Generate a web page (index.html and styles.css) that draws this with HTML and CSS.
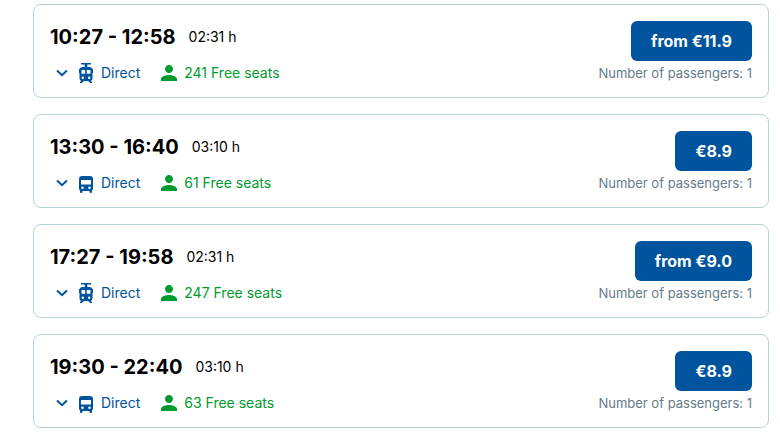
FILE: index.html
```html
<!DOCTYPE html>
<html lang="en">
<head>
<meta charset="utf-8">
<title>Connections</title>
<link rel="stylesheet" href="styles.css">
</head>
<body>
<svg class="sprite" aria-hidden="true">
  <symbol id="chevron" viewBox="0 0 12 8"><path d="M1 1.500l5 4.700 5-4.700" fill="none" stroke="currentColor" stroke-width="2"/></symbol>
  <symbol id="tram" viewBox="0 0 14 20"><path fill="currentColor" fill-rule="evenodd" d="M2 0h10v1.500H8.300V4h2.200A3 3 0 0 1 13.400 6H14v4h-.5v5.500a2.500 2.500 0 0 1-1.700 2.300l1.200 1.200v1h-1.800l-2-2H4.800l-2 2H1v-1l1.200-1.200A2.500 2.500 0 0 1 .5 15.500V10H0V6h.6A3 3 0 0 1 3.500 4h2.200V1.500H2zM2.500 7v3.800h3.700V7zm5.300 0v3.800h3.700V7zM3.800 13.500a1.200 1.200 0 1 0 0 2.400 1.200 1.200 0 0 0 0-2.400zm6.400 0a1.200 1.200 0 1 0 0 2.400 1.200 1.200 0 0 0 0-2.400z"/></symbol>
  <symbol id="bus" viewBox="0 0 14 20"><path fill="currentColor" fill-rule="evenodd" d="M3 3h8a3 3 0 0 1 3 3v9.500a2 2 0 0 1-1 1.800V19a1 1 0 0 1-1 1h-.5a1 1 0 0 1-1-1v-1h-7v1a1 1 0 0 1-1 1H2a1 1 0 0 1-1-1v-1.700a2 2 0 0 1-1-1.800V6a3 3 0 0 1 3-3zM2 7v4.500h10V7zM3.500 13.500a1.300 1.300 0 1 0 0 2.600 1.300 1.300 0 0 0 0-2.600zm7 0a1.300 1.300 0 1 0 0 2.600 1.300 1.300 0 0 0 0-2.600z"/></symbol>
  <symbol id="person" viewBox="4 4 16 16"><path fill="currentColor" d="M12 12c2.210 0 4-1.790 4-4s-1.790-4-4-4-4 1.790-4 4 1.790 4 4 4zm0 2c-2.670 0-8 1.340-8 4v2h16v-2c0-2.660-5.330-4-8-4z"/></symbol>
</svg>
<main class="trips">
  <article class="trip">
    <div class="info">
      <div class="times"><h2>10:27 - 12:58</h2><span class="duration">02:31 h</span></div>
      <div class="details">
        <button class="route" type="button"><svg class="chevron"><use href="#chevron"/></svg><svg class="vehicle"><use href="#tram"/></svg>Direct</button>
        <span class="seats"><svg class="person"><use href="#person"/></svg>241 Free seats</span>
      </div>
    </div>
    <div class="offer"><button class="price" type="button">from €11.9</button><p>Number of passengers: 1</p></div>
  </article>
  <article class="trip">
    <div class="info">
      <div class="times"><h2>13:30 - 16:40</h2><span class="duration">03:10 h</span></div>
      <div class="details">
        <button class="route" type="button"><svg class="chevron"><use href="#chevron"/></svg><svg class="vehicle"><use href="#bus"/></svg>Direct</button>
        <span class="seats"><svg class="person"><use href="#person"/></svg>61 Free seats</span>
      </div>
    </div>
    <div class="offer"><button class="price" type="button">€8.9</button><p>Number of passengers: 1</p></div>
  </article>
  <article class="trip">
    <div class="info">
      <div class="times"><h2>17:27 - 19:58</h2><span class="duration">02:31 h</span></div>
      <div class="details">
        <button class="route" type="button"><svg class="chevron"><use href="#chevron"/></svg><svg class="vehicle"><use href="#tram"/></svg>Direct</button>
        <span class="seats"><svg class="person"><use href="#person"/></svg>247 Free seats</span>
      </div>
    </div>
    <div class="offer"><button class="price" type="button">from €9.0</button><p>Number of passengers: 1</p></div>
  </article>
  <article class="trip">
    <div class="info">
      <div class="times"><h2>19:30 - 22:40</h2><span class="duration">03:10 h</span></div>
      <div class="details">
        <button class="route" type="button"><svg class="chevron"><use href="#chevron"/></svg><svg class="vehicle"><use href="#bus"/></svg>Direct</button>
        <span class="seats"><svg class="person"><use href="#person"/></svg>63 Free seats</span>
      </div>
    </div>
    <div class="offer"><button class="price" type="button">€8.9</button><p>Number of passengers: 1</p></div>
  </article>
</main>
</body>
</html>
```
FILE: styles.css
```css
* { box-sizing: border-box; }
body { margin: 0; background: #fff; color: #000; font-family: Inter, "Liberation Sans", sans-serif; font-size: 14px; }
h2, p { margin: 0; }
button { font: inherit; border: 0; cursor: pointer; }
.sprite { display: none; }
.trips { display: flex; flex-direction: column; gap: 16px; padding: 4px 11px 4px 33px; }
.trip { display: flex; justify-content: space-between; padding: 16px 16px 14px; border: 1px solid #b8d1da; border-radius: 8px; }
.times { display: flex; align-items: center; gap: 13px; line-height: 30px; }
.duration { line-height: 32px; }
h2 { font-size: 20px; font-weight: 700; }
.details { display: flex; align-items: center; gap: 21px; margin-top: 10px; padding-left: 6px; }
.route, .seats { display: flex; align-items: center; line-height: 20px; }
.route { padding: 0; background: none; color: #00549d; }
.seats { color: #009b2e; gap: 7px; }
.chevron { width: 12px; height: 8px; margin-right: 11px; }
.vehicle { width: 14px; height: 20px; margin-right: 8px; }
.person { width: 16px; height: 16px; }
.offer { display: flex; flex-direction: column; align-items: flex-end; }
.price { height: 40px; padding: 0 20px; border-radius: 6px; background: #00549d; color: #fff; font-size: 16px; font-weight: 700; }
.offer p { margin-top: 2px; font-size: 13px; line-height: 20px; color: #647b88; }
```
